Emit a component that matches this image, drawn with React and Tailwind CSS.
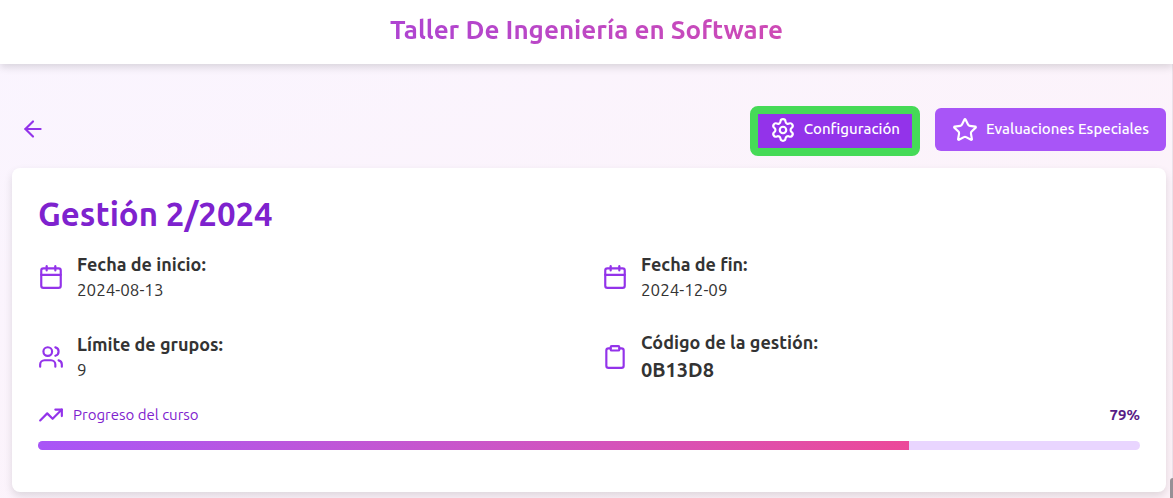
import React from "react";
import { ArrowLeft, Calendar, Clipboard, Settings, Star, TrendingUp, Users } from "lucide-react";

const PROGRESS = 79;

function Detail({ icon: Icon, label, children }) {
  return (
    <div className="flex items-center gap-[13px]">
      <Icon className="size-[26px] shrink-0 text-[#9333ea]" strokeWidth={2} />
      <dl>
        <dt className="text-[18px] leading-[26px] font-semibold">{label}</dt>
        <dd className="text-[17px] leading-[26px]">{children}</dd>
      </dl>
    </div>
  );
}

export default function App() {
  return (
    <div className="relative flex min-h-screen flex-col bg-linear-to-br from-[#faf5ff] to-[#fdf2f8] font-['Ubuntu','Noto_Sans',sans-serif] text-[#333333]">
      <header className="z-10 flex h-16 items-center bg-white px-8 pb-1 shadow-[0_3px_8px_rgba(0,0,0,0.14)]">
        <h1 className="w-full bg-linear-to-r from-[#9333ea] to-[#ec4899] bg-clip-text text-center text-[26px] leading-9 font-bold text-transparent">
          Taller De Ingeniería en Software
        </h1>
      </header>

      <main className="flex flex-1 flex-col border-r border-[#ebe2ea] pt-[42px] pr-[6px] pb-[5px] pl-3">
        <div className="mb-3 flex items-start justify-between">
          <button
            type="button"
            aria-label="Volver"
            className="ml-2 flex h-[46px] items-center text-[#9333ea]"
          >
            <ArrowLeft className="size-[26px]" />
          </button>
          <div className="flex items-baseline gap-[15px]">
            <button
              type="button"
              className="flex h-[50px] items-center gap-2 rounded-lg border-8 border-[#46da57] bg-[#9333ea] px-3 pb-[3px] text-[15px] font-medium text-white"
            >
              <Settings className="size-[26px]" />
              Configuración
            </button>
            <button
              type="button"
              className="flex h-[43px] items-center gap-2 rounded-md bg-[#a855f7] px-[17px] text-[15px] font-medium text-white"
            >
              <Star className="size-[26px]" />
              Evaluaciones Especiales
            </button>
          </div>
        </div>

        <section className="rounded-lg bg-white px-[26px] pt-[26px] pb-[42px] shadow-[0_4px_8px_rgba(0,0,0,0.12)]">
          <h2 className="mb-[17px] text-[33px] leading-[40px] font-bold text-[#7e22ce]">Gestión 2/2024</h2>
          <div className="grid grid-cols-2 gap-[26px]">
            <Detail icon={Calendar} label="Fecha de inicio:">2024-08-13</Detail>
            <Detail icon={Calendar} label="Fecha de fin:">2024-12-09</Detail>
            <Detail icon={Users} label="Límite de grupos:">9</Detail>
            <Detail icon={Clipboard} label="Código de la gestión:">
              <strong className="block text-[20px] leading-[30px] font-semibold">0B13D8</strong>
            </Detail>
          </div>
          <div className="mt-4 mb-3 flex items-center justify-between text-[15px] leading-[28px]">
            <span className="flex items-center gap-[9px] text-[#7e22ce]">
              <TrendingUp className="size-[26px] text-[#9333ea]" />
              <span id="progress-label">Progreso del curso</span>
            </span>
            <span className="font-semibold text-[#581c87]">{PROGRESS}%</span>
          </div>
          <div
            role="progressbar"
            aria-labelledby="progress-label"
            aria-valuenow={PROGRESS}
            aria-valuemin={0}
            aria-valuemax={100}
            className="h-[9px] overflow-hidden rounded-full bg-[#e9d5ff]"
          >
            <div
              className="h-full bg-linear-to-r from-[#a855f7] to-[#ec4899]"
              style={{ width: `${PROGRESS}%` }}
            />
          </div>
        </section>
      </main>
      <div aria-hidden="true" className="absolute right-0 bottom-0 h-5 w-[3px] rounded-tl bg-[#969096]" />
    </div>
  );
}
